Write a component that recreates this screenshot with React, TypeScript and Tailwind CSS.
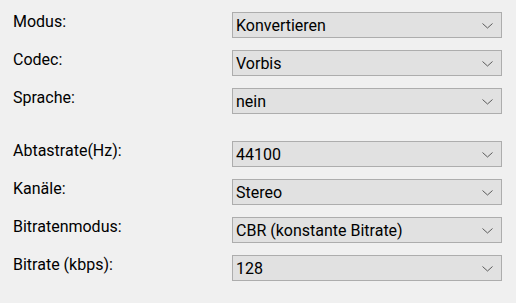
const groups: { label: string; value: string }[][] = [
  [
    { label: "Modus:", value: "Konvertieren" },
    { label: "Codec:", value: "Vorbis" },
    { label: "Sprache:", value: "nein" },
  ],
  [
    { label: "Abtastrate(Hz):", value: "44100" },
    { label: "Kanäle:", value: "Stereo" },
    { label: "Bitratenmodus:", value: "CBR (konstante Bitrate)" },
    { label: "Bitrate (kbps):", value: "128" },
  ],
];

function Chevron() {
  return (
    <svg width="11" height="6" viewBox="0 0 11 6" className="shrink-0">
      <polyline points="0.5,0.5 5.5,5 10.5,0.5" fill="none" stroke="#5a5a5a" strokeWidth="1" />
    </svg>
  );
}

function Row({ label, value }: { label: string; value: string }) {
  return (
    <div className="flex items-start">
      <div className="w-[219px] leading-[20px]">{label}</div>
      <div className="w-[270px] h-[26px] border border-[#adadad] bg-[#e1e1e1] flex items-center justify-between pl-[3px] pr-[8px] pt-[1px]">
        <span className="leading-[20px]">{value}</span>
        <Chevron />
      </div>
    </div>
  );
}

export default function App() {
  return (
    <div
      className="w-[516px] h-[303px] bg-[#f0f0f0] pt-[12px] pl-[13px] text-[16px] text-black"
      style={{ fontFamily: "Roboto, 'Noto Sans', sans-serif" }}
    >
      {groups.map((g, i) => (
        <div key={i} className={`flex flex-col gap-[12px] ${i > 0 ? "mt-[27px]" : ""}`}>
          {g.map((r) => (
            <Row key={r.label} label={r.label} value={r.value} />
          ))}
        </div>
      ))}
    </div>
  );
}
